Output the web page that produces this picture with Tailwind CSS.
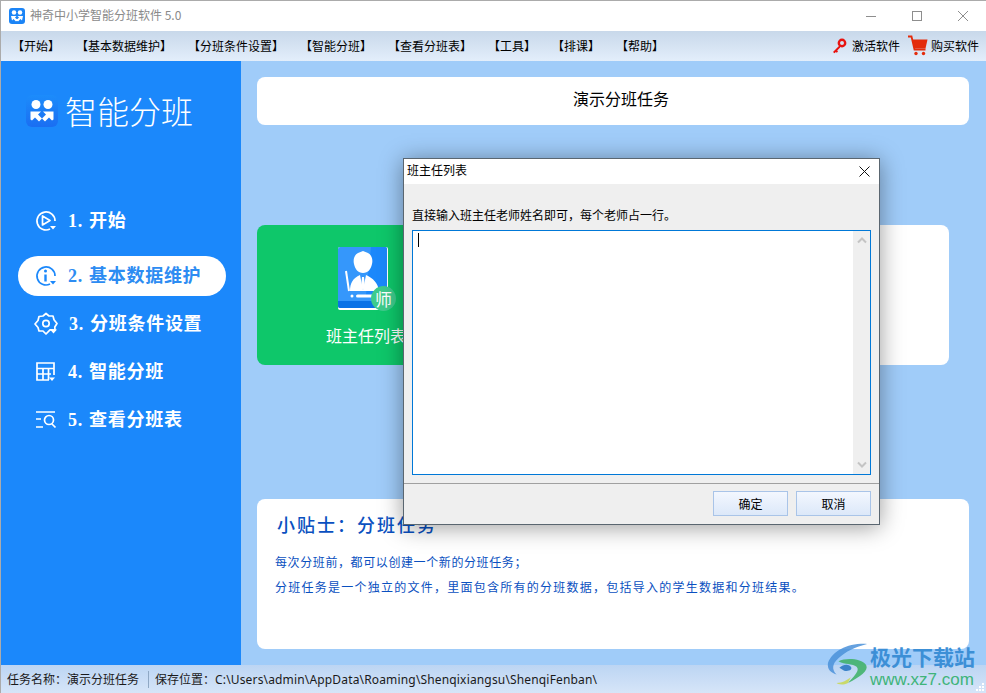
<!DOCTYPE html>
<html lang="zh">
<head>
<meta charset="utf-8">
<script src="https://cdn.jsdelivr.net/npm/@tailwindcss/browser@4"></script>
</head>
<body class="m-0 overflow-hidden bg-white">
<div class="relative flex h-[693px] w-[986px] flex-col overflow-hidden border-t border-l border-[#ababab] bg-white font-['Noto_Sans_CJK_SC','Noto_Sans',sans-serif] text-[12px] text-black">

  <!-- title bar -->
  <div class="flex h-[30px] shrink-0 items-center pl-[8px]">
    <svg class="h-[16px] w-[16px]" viewBox="0 0 32 32"><rect width="32" height="32" rx="6" fill="#1b84f6"/><circle cx="10" cy="9" r="4.500" fill="#fff"/><circle cx="22" cy="9" r="4.500" fill="#fff"/><path d="M4 16h11l-3 3 5 5-3 3-5-5-3 3zM28 16H17l3 3-5 5 3 3 5-5 3 3z" fill="#fff"/></svg>
    <span class="ml-[5px] pb-[2px] text-[#8a8a8a]">神奇中小学智能分班软件 5.0</span>
    <div class="ml-auto flex items-center">
      <svg class="mr-[34px] h-[12px] w-[12px]" viewBox="0 0 12 12"><path d="M1 6.500h10" stroke="#8e8e8e"/></svg>
      <svg class="mr-[34px] h-[12px] w-[12px]" viewBox="0 0 12 12"><rect x="1.500" y="1.500" width="9" height="9" fill="none" stroke="#8e8e8e"/></svg>
      <svg class="mr-[17px] h-[12px] w-[12px]" viewBox="0 0 12 12"><path d="M1 1l10 10M11 1L1 11" stroke="#8e8e8e"/></svg>
    </div>
  </div>

  <!-- menu bar -->
  <div class="flex h-[30px] shrink-0 items-center gap-[16px] bg-gradient-to-b from-[#c8d8ea] to-[#e3eefb] pl-[11px] pr-[7px]">
    <span>【开始】</span><span>【基本数据维护】</span><span>【分班条件设置】</span><span>【智能分班】</span><span>【查看分班表】</span><span>【工具】</span><span>【排课】</span><span>【帮助】</span>
    <div class="ml-auto flex items-center">
      <svg class="h-[16px] w-[16px]" viewBox="0 0 16 16"><circle cx="11" cy="5" r="3.200" fill="none" stroke="#e8130f" stroke-width="2.400"/><path d="M8.700 7.300L2 14l1.500 1.200 1.300-1.300 1 .8 1.200-1.200-.8-1 3-3z" fill="#e8130f"/></svg>
      <span class="ml-[5px]">激活软件</span>
      <svg class="ml-[7px] h-[22px] w-[22px]" viewBox="0 0 22 22"><path d="M1 1.500h3.500l3 13h11" fill="none" stroke="#e32b0b" stroke-width="1.800"/><path d="M5 4.500h15.500l-2 9h-11z" fill="#e32b0b"/><circle cx="9" cy="18.500" r="1.700" fill="#e32b0b"/><circle cx="16.500" cy="18.500" r="1.700" fill="#e32b0b"/></svg>
      <span class="ml-[2px]">购买软件</span>
    </div>
  </div>

  <!-- body -->
  <div class="flex min-h-0 flex-1">
    <aside class="flex w-[240px] shrink-0 flex-col bg-[#1b88fb] pt-[33px] text-white">
      <div class="flex h-[34px] items-center pl-[25px]">
        <svg class="h-[32px] w-[32px]" viewBox="0 0 32 32"><defs><linearGradient id="lg" x1="0" y1="0" x2="0" y2="1"><stop offset="0" stop-color="#1c8cfb"/><stop offset="1" stop-color="#1a6ef2"/></linearGradient></defs><rect width="32" height="32" rx="6" fill="url(#lg)"/><circle cx="10" cy="9.500" r="4.500" fill="#fff"/><circle cx="22" cy="9.500" r="4.500" fill="#fff"/><path d="M4.500 16.500h10.500l-3 3 4 4-3 3-4-4-3 3 -1.500-1zM27.500 16.500H17l3 3-4 4 3 3 4-4 3 3 1.500-1z" fill="#fff"/></svg>
        <span class="ml-[7px] pb-[3px] text-[32px] leading-[34px] font-light">智能分班</span>
      </div>
      <nav class="mt-[73px] flex flex-col font-['Liberation_Serif','Noto_Sans_CJK_SC',serif] text-[18px] font-bold tracking-[.7px]">
        <div class="flex h-[40px] items-center pl-[34px]">
          <svg class="h-[22px] w-[22px]" viewBox="0 0 22 22" fill="none" stroke="#fff" stroke-width="1.700"><path d="M15 19A9 9 0 1 1 20 11"/><path d="M7.500 6v9l7.500-4.500z" stroke-linejoin="round"/><path d="M15 16h6l-3 3.500z" fill="#fff" stroke="none"/></svg>
          <span class="ml-[11px] [word-spacing:1px]">1. 开始</span>
        </div>
        <div class="ml-[17px] mt-[15px] flex h-[40px] w-[208px] items-center rounded-full bg-white pl-[17px] text-[#2d8cf2]">
          <svg class="h-[22px] w-[22px]" viewBox="0 0 22 22" fill="none" stroke="#1b88fb" stroke-width="1.700"><path d="M15 19A9 9 0 1 1 20 11"/><path d="M10.500 9.500v7" stroke-width="2.400"/><circle cx="10.500" cy="6" r="1.500" fill="#1b88fb" stroke="none"/><path d="M15 16h6l-3 3.500z" fill="#1b88fb" stroke="none"/></svg>
          <span class="ml-[11px] [word-spacing:1px]">2. 基本数据维护</span>
        </div>
        <div class="mt-[8px] flex h-[40px] items-center pl-[33px]">
          <svg class="h-[24px] w-[24px]" viewBox="0 0 24 24" fill="none" stroke="#fff" stroke-width="1.700" stroke-linejoin="round"><path d="M12 1.500l3 2.500 4 0 1 3.800 3 3.700-2.200 3.500 .2 3-3-.2h-2L12 22l-3-3H5l-1-3.500L1 12l3-3.500L5 4.500l4-.5z"/><circle cx="12" cy="11.500" r="3.200"/><path d="M16 17.500h7l-3.500 4z" fill="#fff" stroke="none"/></svg>
          <span class="ml-[11px] [word-spacing:1px]">3. 分班条件设置</span>
        </div>
        <div class="mt-[8px] flex h-[40px] items-center pl-[34px]">
          <svg class="h-[22px] w-[22px]" viewBox="0 0 22 22" fill="none" stroke="#fff" stroke-width="1.700"><path d="M14 19H2V2h17v12"/><path d="M2 7.500h17M2 13h14M8 7.500V19M13.500 7.500V19"/><path d="M14 16.500h6l-3 3.500z" fill="#fff" stroke="none"/></svg>
          <span class="ml-[11px] [word-spacing:1px]">4. 智能分班</span>
        </div>
        <div class="mt-[8px] flex h-[40px] items-center pl-[34px]">
          <svg class="h-[22px] w-[22px]" viewBox="0 0 22 22" fill="none" stroke="#fff" stroke-width="1.700"><path d="M1 3h19M1 10h5M1 18h7"/><circle cx="14" cy="11" r="4.500"/><path d="M17 15l3.500 3.500"/></svg>
          <span class="ml-[11px] [word-spacing:1px]">5. 查看分班表</span>
        </div>
      </nav>
    </aside>

    <main class="flex min-w-0 flex-1 flex-col bg-[#a0ccf9] pl-[16px] pr-[17px] pt-[16px]">
      <div class="flex h-[48px] shrink-0 items-center justify-center rounded-[8px] bg-white pb-[6px] pl-[16px] text-[16px]">演示分班任务</div>

      <div class="mt-[100px] flex h-[140px] shrink-0 pr-[20px]">
        <div class="flex w-[218px] shrink-0 flex-col items-center rounded-l-[8px] bg-[#0ec76a] pt-[22px] text-white">
          <div class="relative mr-[6px] h-[63px] w-[50px]">
            <svg class="h-[63px] w-[50px]" viewBox="0 0 50 63"><rect width="50" height="63" rx="2" fill="#fff"/><rect width="49" height="61" rx="2" fill="#3597fb"/><path d="M33 0h14a2 2 0 0 1 2 2v46H28z" fill="#1b88fb"/><path d="M0 54h49v5a2 2 0 0 1-2 2H2a2 2 0 0 1-2-2z" fill="#0a72e6"/><path d="M25 4l5 2c4 2 5 7 4 11-1 5-4 9-9 9s-8-4-9-9c-1-4 0-9 4-11z" fill="#fff"/><path d="M12 44c0-8 3-13 10-16l3 15 3-15c7 3 12 8 13 16z" fill="#fff"/><path d="M24 30h2l1 10-2 3-2-3z" fill="#fff"/><path d="M8 24l3 20" stroke="#fff" stroke-width="2"/><circle cx="14" cy="49" r="1.500" fill="#fff"/><rect x="18" y="47.500" width="20" height="3" rx="1.500" fill="#fff"/></svg>
            <span class="absolute -right-[8px] bottom-[-1px] flex h-[25px] w-[25px] items-center justify-center rounded-full bg-[#3ecb8c] text-[17px] leading-none">师</span>
          </div>
          <span class="mt-[13px] text-[16px]">班主任列表</span>
        </div>
        <div class="flex-1 rounded-r-[8px] bg-white"></div>
      </div>

      <div class="mt-[134px] h-[150px] shrink-0 rounded-[8px] bg-white pl-[18px] pt-[13px] text-[#0a50c0]">
        <p class="pl-[2px] text-[18px] leading-[24px] font-medium tracking-[2px]">小贴士&#xFF1A;分班任务</p>
        <p class="mt-[18px] leading-[16px] tracking-[.6px]">每次分班前&#xFF0C;都可以创建一个新的分班任务&#xFF1B;</p>
        <p class="mt-[9px] leading-[16px] tracking-[1.25px]">分班任务是一个独立的文件&#xFF0C;里面包含所有的分班数据&#xFF0C;包括导入的学生数据和分班结果。</p>
      </div>
    </main>
  </div>

  <!-- status bar -->
  <div class="flex h-[28px] shrink-0 items-center bg-gradient-to-b from-[#bcd5f3] to-[#d6e5f8] pl-[6px] text-[#1a1a1a]">
    <span>任务名称&#xFF1A;演示分班任务</span>
    <span class="ml-[9px] h-[17px] w-px bg-[#8fa8c4]"></span>
    <span class="ml-[6px]">保存位置&#xFF1A;<span class="font-['Noto_Sans',sans-serif] tracking-[.16px]">C:\Users\admin\AppData\Roaming\Shenqixiangsu\ShenqiFenban\</span></span>
  </div>

  <!-- dialog -->
  <div class="absolute left-[402px] top-[157px] flex h-[367px] w-[477px] flex-col border border-[#5a6670] bg-[#efefef] shadow-[0_2px_22px_rgba(0,0,0,0.4)]">
    <div class="flex h-[25px] shrink-0 items-center justify-between bg-white pb-[4px] pl-[3px] pr-[9px]">
      <span>班主任列表</span>
      <svg class="mt-[4px] h-[11px] w-[11px]" viewBox="0 0 11 11"><path d="M.5.5l10 10M10.500.5l-10 10" stroke="#111" stroke-width="1"/></svg>
    </div>
    <p class="mt-[23px] pl-[8px] leading-[16px]">直接输入班主任老师姓名即可&#xFF0C;每个老师占一行。</p>
    <div class="ml-[8px] mt-[7px] flex h-[245px] w-[459px] shrink-0 border border-[#0078d7] bg-white">
      <span class="ml-[5px] mt-[2px] h-[14px] w-px bg-black"></span>
      <div class="ml-auto flex w-[17px] flex-col items-center justify-between bg-[#efefef] py-[5px]">
        <svg class="h-[8px] w-[10px]" viewBox="0 0 10 8"><path d="M1 6.500l4-4 4 4" fill="none" stroke="#c4c4c4" stroke-width="2"/></svg>
        <svg class="h-[8px] w-[10px]" viewBox="0 0 10 8"><path d="M1 1.500l4 4 4-4" fill="none" stroke="#c4c4c4" stroke-width="2"/></svg>
      </div>
    </div>
    <div class="mt-[8px] h-px shrink-0 bg-[#a0a0a0]"></div>
    <div class="mt-[7px] flex justify-end gap-[8px] pr-[8px]">
      <button class="h-[25px] w-[75px] border border-[#a9c4e8] bg-gradient-to-b from-[#f3f7fe] to-[#dce8f9] text-[12px]">确定</button>
      <button class="h-[25px] w-[75px] border border-[#a9c4e8] bg-gradient-to-b from-[#f3f7fe] to-[#dce8f9] text-[12px]">取消</button>
    </div>
  </div>

  <!-- watermark -->
  <div class="absolute left-[826px] top-[642px] flex h-[48px] w-[160px] items-start">
    <svg class="h-[42px] w-[42px] shrink-0" viewBox="0 0 44 44"><path d="M42 1C22 0 6 8 1 21c-1 7 3 10 9 12 -5-5-5-11 2-17C19 9 30 4 42 1z" fill="#4a90d9" opacity=".85"/><path d="M12 19c8-4 24-3 29 4 3 6-6 12-19 19 6-7 13-13 9-17-4-4-12-2-19-6z" fill="#43b36c" opacity=".9"/><path d="M13 26c4-4 10-4 12-1s-2 5-7 4z" fill="#3b83c9"/><path d="M22 42c-6 3-11 1-12 0 6 0 11-3 15-6z" fill="#c9d96b"/></svg>
    <div class="ml-[1px] flex flex-col">
      <span class="text-[21px] leading-[26px] font-bold whitespace-nowrap text-[#3c8fd6]">极光下载站</span>
      <span class="font-['Liberation_Sans',sans-serif] text-[17px] leading-[22px] whitespace-nowrap text-[#3fb47a]">www.xz7.com</span>
    </div>
  </div>

  <!-- resize grip -->
  <svg class="absolute right-[1px] bottom-[1px] h-[10px] w-[10px]" viewBox="0 0 10 10" fill="#fff"><rect x="7" y="1" width="2" height="2"/><rect x="4" y="4" width="2" height="2"/><rect x="7" y="4" width="2" height="2"/><rect x="1" y="7" width="2" height="2"/><rect x="4" y="7" width="2" height="2"/><rect x="7" y="7" width="2" height="2"/></svg>
</div>
</body>
</html>
